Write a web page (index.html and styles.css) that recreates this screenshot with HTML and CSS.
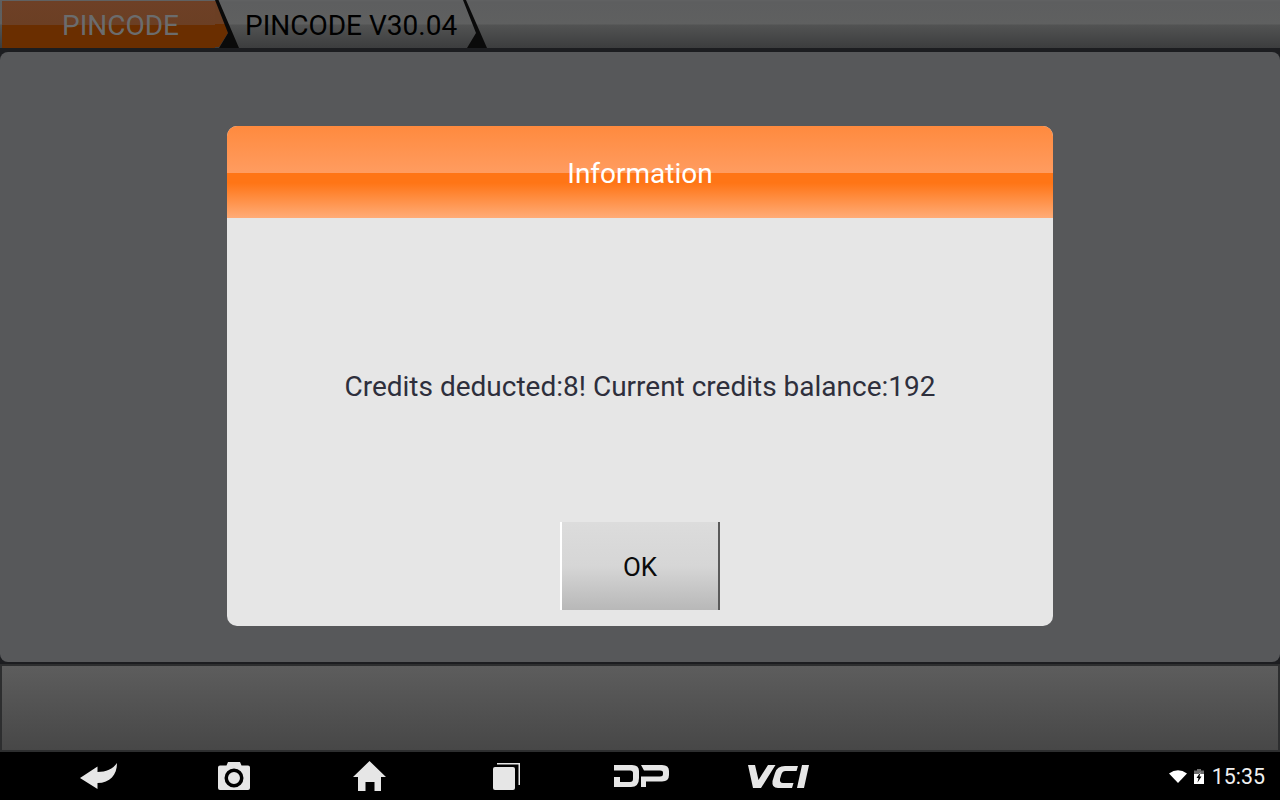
FILE: index.html
```html
<!DOCTYPE html>
<html lang="en">
<head>
<meta charset="utf-8">
<title>PINCODE</title>
<link rel="stylesheet" href="styles.css">
</head>
<body>
<div class="screen">
  <header class="crumbs">
    <div class="crumb crumb-first">
      <span class="crumb-label">PINCODE</span>
      <svg class="crumb-edge" width="24" height="48" viewBox="0 0 24 48"><polygon class="fill-upper" points="0,1 1,1 10.500,24 0,24"/><polygon class="fill-lower" points="0,24 10.500,24 13,33 4,47 0,47"/><polygon class="edge-dark" points="0,0 3.500,0 24,48 4,48 13,33"/></svg>
    </div>
    <div class="crumb crumb-second">
      <span class="crumb-label">PINCODE V30.04</span>
      <svg class="crumb-edge" width="24" height="48" viewBox="0 0 24 48"><polygon class="edge-dark" points="0,0 3,0 24,48 4,48 13,33"/></svg>
    </div>
  </header>
  <main class="panel"></main>
  <div class="footer-bar"></div>
  <nav class="navbar">
    <div class="nav-icons">
      <svg class="nav-icon nav-back" width="37" height="26" viewBox="0 0 37 26"><path d="M0 15 L17.500 3.500 V9 C26 9 33 6 37 0 C37 12 30 20 17.500 20 V26 Z"/></svg>
      <svg class="nav-icon nav-camera" width="32" height="28" viewBox="0 0 32 28"><path fill-rule="evenodd" d="M2 3.500 H8.500 L10 0 H22 L23.500 3.500 H30 Q32 3.500 32 5.500 V26 Q32 28 30 28 H2 Q0 28 0 26 V5.500 Q0 3.500 2 3.500 Z M16 6.500 A9.500 9.500 0 1 0 16 25.500 A9.500 9.500 0 1 0 16 6.500 Z M16 10 A6 6 0 1 1 16 22 A6 6 0 1 1 16 10 Z"/></svg>
      <svg class="nav-icon nav-home" width="33" height="30" viewBox="0 0 33 30"><path d="M16.500 0 L33 16 H28 V30 H21.500 V21 H12.500 V30 H5 V16 H0 Z"/></svg>
      <svg class="nav-icon nav-pages" width="27" height="27" viewBox="0 0 27 27"><path d="M4 0 H27 V22 H25.500 V1.500 H4 Z"/><rect x="0" y="4" width="22" height="23" rx="2"/></svg>
      <svg class="nav-icon nav-dp" width="55" height="22" viewBox="0 0 55 22"><path d="M0 0 H18 Q25 0 25 6 V13 Q25 22 17 22 H0 V12 H6 V17 H16 Q19 17 19 14 V8 Q19 5.500 16 5.500 H0 Z"/><path d="M27 0 H48 Q55 0 55 6 V10 Q55 16.500 48 16.500 H32 V22 H27 V11.500 H46 Q49 11.500 49 9 V7.500 Q49 5.500 46 5.500 H30 Z"/></svg>
      <svg class="nav-icon nav-vci" width="61" height="23" viewBox="0 0 61 23"><path d="M0 0 H7 L10.500 15 L20 0 H27.500 L13 23 H5 Z"/><path d="M27 8 Q29 1 37 1 H50 L48.500 6 H37.500 Q34.500 6 33.500 9 L32 14 Q31.500 18 35 18 H45.500 L44 23 H30 Q23.500 23 24.500 16 Z"/><path d="M54 0 H61 L56 23 H49 Z"/></svg>
    </div>
    <div class="status">
      <svg class="status-icon" width="18" height="13" viewBox="0 0 18 13"><path d="M0 3.500 Q9 -3 18 3.500 L9 13 Z"/></svg>
      <svg class="status-icon" width="10" height="15" viewBox="0 0 10 15"><path class="batt-top" d="M3 0 H7 V1.500 H10 V5 H0 V1.500 H3 Z"/><path fill-rule="evenodd" d="M0 5 H10 V15 H0 Z M6.500 3 L2.500 9 H4.500 L3.500 13.500 L7.500 7.500 H5.500 Z"/></svg>
      <span class="clock">15:35</span>
    </div>
  </nav>
  <div class="overlay">
    <section class="dialog">
      <h1 class="dialog-title">Information</h1>
      <p class="dialog-text">Credits deducted:8! Current credits balance:192</p>
      <div class="dialog-actions"><button class="ok" type="button">OK</button></div>
    </section>
  </div>
</div>
</body>
</html>
```
FILE: styles.css
```css
* { box-sizing: border-box; }
html, body { margin: 0; padding: 0; }
body { font-family: Roboto, "Liberation Sans", sans-serif; background: #000; }
.screen { position: relative; width: 1280px; height: 800px; display: flex; flex-direction: column; background: #1c1d20; overflow: hidden; }
.crumbs { height: 48px; display: flex; flex: none; padding-left: 2px; background: linear-gradient(#616263 0, #5d5e5f 2px, #5f6060 50%, #525353 52%, #3c3d3e 100%); }
.crumb { height: 48px; display: flex; font-size: 28px; }
.crumb-label { display: flex; align-items: center; padding-top: 2px; }
.crumb-first .crumb-label { width: 213px; height: 47px; margin-top: 1px; justify-content: center; padding-left: 24px; padding-top: 1px; color: #6b6c6d; background: linear-gradient(#6e4026 0, #6b3f24 50%, #6a2e00 50%, #6a2e00 100%); }
.crumb-second .crumb-label { width: 224px; padding-left: 6px; color: #000; }
.crumb-edge { flex: none; display: block; }
.fill-upper { fill: #6b3f24; }
.fill-lower { fill: #6a2e00; }
.edge-dark { fill: #0a0a0a; }
.batt-top { fill: #6c6c6c; }
.panel { height: 610px; flex: none; margin-top: 4px; background: #57585a; border-radius: 8px; }
.footer-bar { height: 88px; flex: none; margin-top: 2px; border: 2px solid #2d2e2f; background: linear-gradient(#5d5d5d, #474747); }
.navbar { flex: 1; background: #000; display: flex; align-items: center; justify-content: space-between; padding: 0 15px 0 80px; }
.nav-icons { display: flex; align-items: center; }
.nav-icon { flex: none; fill: #e6e6e6; }
.nav-camera { margin-left: 101px; }
.nav-home { margin-left: 103px; }
.nav-pages { margin-left: 107px; }
.nav-dp { margin-left: 94px; }
.nav-vci { margin-left: 79px; }
.status { display: flex; align-items: center; gap: 7px; color: #f0f0f0; }
.status-icon { fill: #fff; flex: none; }
.clock { font-size: 21.4px; margin-left: 1px; }
.overlay { position: absolute; left: 0; top: 0; width: 1280px; height: 752px; display: flex; align-items: center; justify-content: center; }
.dialog { width: 826px; height: 500px; background: #e6e6e6; border-radius: 10px; overflow: hidden; display: flex; flex-direction: column; }
.dialog-title { margin: 0; height: 92px; flex: none; display: flex; align-items: center; justify-content: center; padding-top: 3px; color: #fff; font-size: 28px; font-weight: 400; background: linear-gradient(#ff8a3e 0, #ff9c60 47px, #ff7516 47px, #ff7516 57px, #ffac78 92px); }
.dialog-text { margin: 0; flex: 1; display: flex; align-items: center; justify-content: center; padding-top: 32px; color: #2e2f3c; font-size: 28px; }
.dialog-actions { display: flex; justify-content: center; padding-bottom: 16px; flex: none; }
.ok { width: 160px; height: 88px; border: 0; border-left: 2px solid #fff; border-right: 2px solid #5a5a5a; background: linear-gradient(#dcdcdc 0, #d6d6d6 50%, #b8b8b8 100%); color: #0a0a0a; font-family: inherit; font-size: 26px; padding: 2px 0 0; }
```
